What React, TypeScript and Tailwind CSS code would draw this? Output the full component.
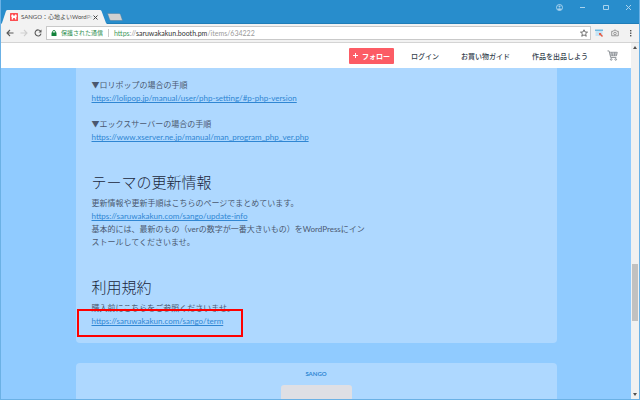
import React from 'react';

const NAV_LINKS = [
  { label: 'ログイン', href: '#login' },
  { label: 'お買い物ガイド', href: '#guide' },
  { label: '作品を出品しよう', href: '#sell' },
];

function TabStrip() {
  return (
    <div className="relative flex h-6 shrink-0 items-end justify-between bg-[#288dcc] border-b border-[#1f7db8]">
      <div className="flex items-end">
        <div className="relative -mb-px flex h-[14px] w-[106px] items-center pl-[9px]">
          <svg className="absolute inset-0 h-full w-full" viewBox="0 0 106 14" preserveAspectRatio="none">
            <path d="M0 14 L1 13 L5 1 Q5.500 0 6.500 0 H99 Q100 0 100.500 1 L105 13 L106 14Z" fill="#f2f2f2" />
          </svg>
          <svg className="relative h-2 w-2 shrink-0" viewBox="0 0 8 8">
            <rect width="8" height="8" rx="0.500" fill="#fc4d50" />
            <path d="M1 3.200 L1.800 1.500 H3 V2.500 H5 V1.500 H6.200 L7 3.200 L6.300 4 V6.500 H4.900 V5 H3.100 V6.500 H1.700 V4Z" fill="#fff" />
          </svg>
          <span className="relative ml-[3px] w-[70px] whitespace-nowrap text-[6px] leading-[12px] text-[#4b4b4b]">
            SANGO：心地よいWord<span className="opacity-50">P</span><span className="opacity-25">r</span>
          </span>
          <button aria-label="タブを閉じる" className="relative ml-[2px]">
            <svg className="h-[5px] w-[5px]" viewBox="0 0 5 5" stroke="#444" strokeWidth="1">
              <path d="M0.500 0.500 L4.500 4.500 M4.500 0.500 L0.500 4.500" />
            </svg>
          </button>
        </div>
        <button aria-label="新しいタブ" className="mb-[2px]">
          <svg className="h-2 w-4" viewBox="0 0 16 8">
            <path d="M0.500 0.500 H12 Q13 0.500 13.500 1.500 L15.500 7.500 H4 Q3 7.500 2.600 6.500Z" fill="#d0d0d0" stroke="#4b7fa3" strokeWidth="0.500" />
          </svg>
        </button>
      </div>
      <div className="flex items-center gap-4 self-start pt-1 pr-[7px] text-[#a9d3ee]">
        <button aria-label="ユーザー">
          <svg className="h-[7px] w-[7px]" viewBox="0 0 14 14">
            <circle cx="7" cy="7" r="6" fill="none" stroke="currentColor" strokeWidth="2" />
            <circle cx="7" cy="5" r="2" fill="currentColor" />
            <path d="M2.500 10 Q7 6.500 11.500 10 Q7 15 2.500 10Z" fill="currentColor" />
          </svg>
        </button>
        <button aria-label="最小化">
          <svg className="h-[7px] w-[7px]" viewBox="0 0 7 7"><path d="M1 3.500 H6" stroke="currentColor" /></svg>
        </button>
        <button aria-label="最大化">
          <svg className="h-[7px] w-[7px]" viewBox="0 0 7 7"><path d="M1.500 1.500 H6.500 V5.500 H1.500Z" fill="none" stroke="currentColor" /></svg>
        </button>
        <button aria-label="閉じる">
          <svg className="h-[7px] w-[7px]" viewBox="0 0 7 7"><path d="M1 1 L6 6 M6 1 L1 6" stroke="currentColor" strokeWidth="1" /></svg>
        </button>
      </div>
    </div>
  );
}

function Toolbar() {
  return (
    <div className="flex h-[19px] shrink-0 items-center border-b border-[#d4d4d4] bg-[#f2f2f2] pl-[5px] pr-1">
      <div className="flex items-center gap-[6px]">
        <button aria-label="戻る">
          <svg className="h-2 w-2" viewBox="0 0 8 8" fill="none" stroke="#5a5a5a" strokeWidth="1.100">
            <path d="M7.500 4 H1 M4 1 L1 4 L4 7" />
          </svg>
        </button>
        <button aria-label="進む">
          <svg className="h-2 w-2" viewBox="0 0 8 8" fill="none" stroke="#cfcfcf" strokeWidth="1.100">
            <path d="M0.500 4 H7 M4 1 L7 4 L4 7" />
          </svg>
        </button>
        <button aria-label="再読み込み">
          <svg className="h-2 w-2" viewBox="0 0 8 8" fill="none" stroke="#5a5a5a" strokeWidth="1.100">
            <path d="M6.600 2.300 A3 3 0 1 0 7 4.600" />
            <path d="M7.500 0.500 V3.500 H4.500Z" fill="#5a5a5a" stroke="none" />
          </svg>
        </button>
      </div>
      <div className="ml-1 flex h-[14px] flex-1 items-center border border-[#c9c9c9] bg-white pl-1 pr-[2px] text-[7px] leading-[12px]">
        <svg className="h-[6px] w-[6px] shrink-0" viewBox="0 0 6 6">
          <rect x="0.500" y="2.500" width="5" height="3.500" fill="#12823a" />
          <path d="M1.600 3 V1.800 A1.400 1.300 0 0 1 4.400 1.800 V3" fill="none" stroke="#12823a" strokeWidth="0.900" />
        </svg>
        <span className="ml-1 whitespace-nowrap text-[6px] text-[#2f8f50]">保護された通信</span>
        <span className="mx-[5px] h-2 w-px bg-[#c9c9c9]" />
        <span className="whitespace-nowrap text-[#9a9a9a]">
          <span className="text-[#3f9a5d]">https</span>://<span className="text-[#333]">saruwakakun.booth.pm</span>/items/634222
        </span>
        <button aria-label="ブックマーク" className="ml-auto">
          <svg className="h-2 w-2" viewBox="0 0 16 16" fill="none" stroke="#505050" strokeWidth="1.600">
            <path d="M8 1.500 L10 6 L15 6.300 L11.200 9.500 L12.500 14.500 L8 11.800 L3.500 14.500 L4.800 9.500 L1 6.300 L6 6Z" />
          </svg>
        </button>
      </div>
      <div className="ml-1 flex items-center gap-2">
        <button aria-label="画面拡張">
          <svg className="h-2 w-2" viewBox="0 0 8 8">
            <rect x="0.500" y="1" width="7" height="6" fill="#c5e4f5" />
            <rect x="0" y="0.500" width="8" height="1.500" fill="#70b9df" />
            <path d="M4 4 H6.500 L5.800 4.800 L8 7 L7 8 L4.800 5.800 L4 6.500Z" fill="#e9593f" />
          </svg>
        </button>
        <button aria-label="スクリーンショット">
          <svg className="h-2 w-2" viewBox="0 0 8 8" fill="none" stroke="#8d8d8d" strokeWidth="0.900">
            <path d="M0.700 2.300 H2.200 L3 1.200 H5 L5.800 2.300 H7.300 V6.800 H0.700Z" />
            <circle cx="4" cy="4.500" r="1.300" />
          </svg>
        </button>
        <button aria-label="メニュー">
          <svg className="h-2 w-2" viewBox="0 0 8 8" fill="#505050">
            <rect x="3" y="1" width="1.400" height="1.400" />
            <rect x="3" y="3.500" width="1.400" height="1.400" />
            <rect x="3" y="6" width="1.400" height="1.400" />
          </svg>
        </button>
      </div>
    </div>
  );
}

function SiteHeader() {
  return (
    <header className="flex h-[25px] shrink-0 items-center justify-end bg-white pr-[13px] text-[7px] leading-[12px] font-medium text-[#353f4d]">
      <button className="flex h-4 items-center gap-1 rounded-[1px] bg-[#fc5c65] px-1 font-bold text-white">
        <svg className="h-[5px] w-[5px]" viewBox="0 0 5 5" stroke="#fff"><path d="M2.500 0 V5 M0 2.500 H5" /></svg>
        フォロー
      </button>
      <nav className="ml-[17px] flex gap-[22px]">
        {NAV_LINKS.map(link => (
          <a key={link.href} href={link.href} className="whitespace-nowrap">{link.label}</a>
        ))}
      </nav>
      <a href="#cart" aria-label="カート" className="ml-[19px]">
        <svg className="h-[11px] w-[11px]" viewBox="0 0 12 12" fill="none" stroke="#70767d" strokeWidth="0.800">
          <path d="M0.500 1 H2.300 L4 8.200 H10.200 M2.700 2.500 H11.200 L10.300 6.300 H3.600 M3 4.400 H10.700 M5.300 2.500 L5.800 6.300 M8.600 2.500 L8.300 6.300" />
          <circle cx="4.600" cy="10.300" r="0.900" />
          <circle cx="9.500" cy="10.300" r="0.900" />
        </svg>
      </a>
    </header>
  );
}

function TextLink({ href }: { href: string }) {
  return (
    <a href={href} className="text-[#2f86d3] underline">{href}</a>
  );
}

function Scrollbar() {
  return (
    <div className="flex w-2 shrink-0 flex-col items-center justify-between bg-[#f1f1f1] py-[3px]">
      <svg className="h-[3px] w-1" viewBox="0 0 4 3"><path d="M0 3 L2 0 L4 3Z" fill="#505050" /></svg>
      <div className="flex w-full flex-1 flex-col">
        <div className="flex-[214]" />
        <div className="mx-px flex-[57] bg-[#c1c1c1]" />
        <div className="flex-[72]" />
      </div>
      <svg className="h-[3px] w-1" viewBox="0 0 4 3"><path d="M0 0 L2 3 L4 0Z" fill="#505050" /></svg>
    </div>
  );
}

export default function App() {
  return (
    <div className="flex h-screen flex-col overflow-hidden border-x border-b border-[#6bb1e5] bg-[#90cbff] font-['Lato','Noto_Sans_CJK_JP',sans-serif]">
      <TabStrip />
      <Toolbar />
      <div className="flex min-h-0 flex-1">
        <div className="flex min-w-0 flex-1 flex-col">
          <SiteHeader />
          <main className="flex min-h-0 flex-1 flex-col items-center gap-5 overflow-hidden">
            {/* Item description */}
            <article className="w-[calc(100%-149px)] shrink-0 rounded-b bg-[#aed8ff] px-4 pt-[11px] pb-[15px] text-[8px] leading-[13px] text-[#4b5870]">
              <p>
                ▼ロリポップの場合の手順<br />
                <TextLink href="https://lolipop.jp/manual/user/php-setting/#p-php-version" />
              </p>
              <p className="mt-[13px]">
                ▼エックスサーバーの場合の手順<br />
                <TextLink href="https://www.xserver.ne.jp/manual/man_program_php_ver.php" />
              </p>

              <h2 className="mt-7 mb-[5px] text-[15px] leading-5 font-light text-[#20273c]">テーマの更新情報</h2>
              <div className="max-w-[280px]">
                <p>更新情報や更新手順はこちらのページでまとめています。</p>
                <p><TextLink href="https://saruwakakun.com/sango/update-info" /></p>
                <p>基本的には、最新のもの（verの数字が一番大きいもの）をWordPressにインストールしてくださいませ。</p>
              </div>

              <h2 className="mt-7 mb-[5px] text-[15px] leading-5 font-light text-[#20273c]">利用規約</h2>
              <p>購入前にこちらをご参照くださいませ。</p>
              <p className="relative">
                <TextLink href="https://saruwakakun.com/sango/term" />
                <span className="pointer-events-none absolute -top-[6px] -left-[15px] h-7 w-[166px] border-2 border-[#f00]" />
              </p>
            </article>

            {/* Shop card */}
            <section className="flex w-[calc(100%-149px)] flex-1 flex-col items-center rounded-t bg-[#aed8ff] pt-[5px]">
              <a href="#shop" className="text-[6px] leading-[12px] font-bold text-[#2f86d3]">SANGO</a>
              <div className="mt-[5px] w-[71px] flex-1 rounded-t-[3px] bg-[#dfdfe4]" />
            </section>
          </main>
        </div>
        <Scrollbar />
      </div>
    </div>
  );
}
